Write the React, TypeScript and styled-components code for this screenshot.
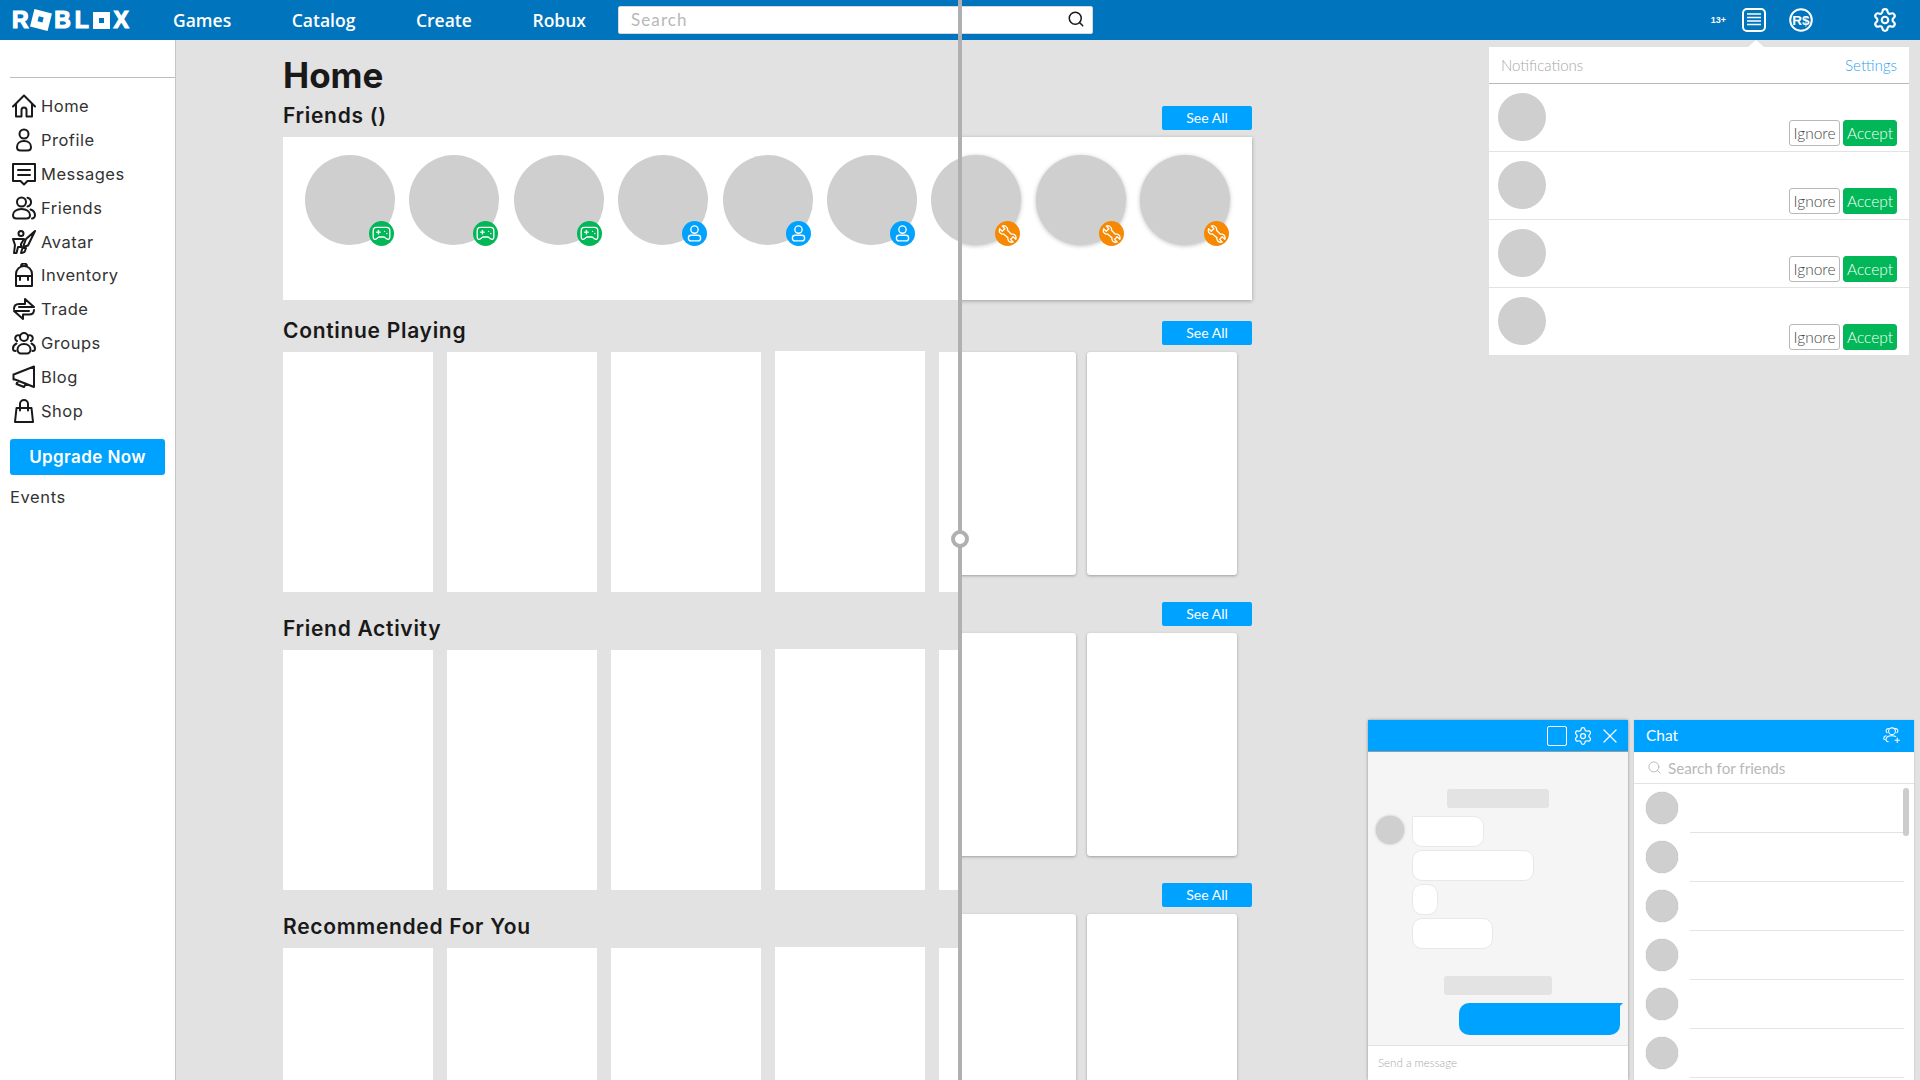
import styled, { createGlobalStyle } from "styled-components";
import { Search, Settings, X } from "lucide-react";

const GOTHAM = `Inter, "Liberation Sans", sans-serif`;
const SOURCE = `Lato, "Open Sans", sans-serif`;

const GlobalStyle = createGlobalStyle`
	* { box-sizing: border-box; }
	html, body { margin: 0; padding: 0; background: #e2e2e2; }
`;

const Page = styled.div`
	position: relative;
	width: 1920px;
	height: 1080px;
	overflow: hidden;
	background: #e2e2e2;
	color: #191919;
	font-family: ${GOTHAM};
`;

/* top bar */
const TopBar = styled.header`
	display: flex;
	align-items: center;
	height: 40px;
	padding: 0 22px 0 12px;
	background: #0074bd;
	color: #fff;
`;

const Logo = styled.div`
	display: flex;
	align-items: center;
	justify-content: space-between;
	width: 117px;
	margin-right: 44px;
`;

const LogoLetter = styled.span`
	font-family: "Liberation Sans", sans-serif;
	font-size: 23px;
	font-weight: 700;
	line-height: 20px;
	color: #fff;
	-webkit-text-stroke: 1.2px #fff;
`;

const LogoBox = styled.span<{ $tilt?: boolean }>`
	position: relative;
	display: block;
	width: ${(p) => (p.$tilt ? 18 : 17)}px;
	height: ${(p) => (p.$tilt ? 18 : 17)}px;
	background: #fff;
	transform: rotate(${(p) => (p.$tilt ? 14 : 0)}deg);
	&::after {
		content: "";
		position: absolute;
		left: 6px;
		top: 6px;
		width: 5px;
		height: 5px;
		background: #0074bd;
	}
`;

const NavLinks = styled.nav`
	display: flex;
	justify-content: space-between;
	width: 413px;
	margin-right: 32px;
`;

const NavLink = styled.a`
	font-family: "Open Sans", sans-serif;
	font-size: 17.5px;
	font-weight: 600;
	color: #fff;
`;

const SearchBox = styled.div`
	display: flex;
	align-items: center;
	justify-content: space-between;
	width: 475px;
	height: 28px;
	padding: 0 7px 2px 12px;
	background: #fff;
	border: 1px solid #d8d8d8;
	border-radius: 2px;
	font-family: ${SOURCE};
	font-size: 17px;
	letter-spacing: 1.1px;
	color: #b8b8b8;
`;

const NavIcons = styled.div`
	display: flex;
	align-items: center;
	gap: 23.5px;
	margin-left: auto;
`;

const AgeLabel = styled.span`
	margin-right: -8px;
	font-family: "Liberation Sans", sans-serif;
	font-size: 9px;
	font-weight: 700;
	color: #fff;
`;

const GearSlot = styled.span`
	display: flex;
	margin-left: 35.5px;
`;

/* sidebar */
const Body = styled.div`
	display: flex;
	height: 1040px;
`;

const Sidebar = styled.aside`
	flex: 0 0 176px;
	padding: 37px 0 0 10px;
	background: #fff;
	border-right: 1px solid #c6c6c6;
`;

const SideRule = styled.hr`
	height: 1px;
	margin: 0 0 11px;
	border: 0;
	background: #bdbdbd;
`;

const SideItem = styled.a`
	display: flex;
	align-items: center;
	gap: 5px;
	height: 33.9px;
	margin-left: 2px;
	font-size: 16.5px;
	letter-spacing: 0.5px;
	color: #333;
`;

const SideIcon = styled.svg`
	flex: 0 0 24px;
	width: 24px;
	height: 24px;
	fill: none;
	stroke: #191919;
	stroke-width: 2;
	stroke-linejoin: round;
	stroke-linecap: round;
`;

const UpgradeButton = styled.button`
	display: block;
	width: 155px;
	height: 36px;
	margin-top: 11px;
	border: 0;
	border-radius: 3px;
	background: #00a2ff;
	color: #fff;
	font-family: ${GOTHAM};
	font-size: 17px;
	font-weight: 600;
	letter-spacing: 0.4px;
`;

const EventsLink = styled.a`
	display: block;
	margin-top: 12px;
	font-size: 16.5px;
	letter-spacing: 0.6px;
	color: #333;
`;

/* boards on either side of the slider */
const Stage = styled.main`
	position: relative;
	flex: 1;
	overflow: hidden;
`;

const BeforeLayer = styled.div`
	position: absolute;
	left: 0;
	top: 0;
	width: 782px;
	height: 100%;
	overflow: hidden;
	background: #e2e2e2;
`;

const BoardWrap = styled.div`
	width: 1076px;
	padding: 15px 0 0 107px;
`;

const PageTitle = styled.h1`
	height: 40px;
	margin: 0 0 11px;
	font-size: 35px;
	font-weight: 700;
	line-height: 40px;
	color: #191919;
`;

const Section = styled.section<{ $gap: number }>`
	margin-bottom: ${(p) => p.$gap}px;
`;

const SectionHeader = styled.div`
	display: flex;
	justify-content: space-between;
	align-items: flex-start;
	width: 969px;
	height: 24px;
	margin-bottom: 7px;
`;

const SectionTitle = styled.h2`
	margin: -2px 0 0;
	font-size: 21px;
	font-weight: 600;
	line-height: 24px;
	letter-spacing: 0.7px;
	color: #191919;
`;

const SeeAll = styled.button`
	width: 90px;
	height: 24px;
	margin-left: auto;
	padding: 0 0 2px;
	border: 0;
	border-radius: 2px;
	background: #00a2ff;
	color: #fff;
	font-family: ${SOURCE};
	font-size: 14px;
	font-weight: 400;
`;

const FriendsCard = styled.div<{ $after: boolean }>`
	display: flex;
	justify-content: space-between;
	width: 969px;
	height: 163px;
	padding: 18px 22px;
	background: #fff;
	box-shadow: ${(p) => (p.$after ? "0 1px 4px rgba(0, 0, 0, 0.3)" : "none")};
`;

const FriendAvatar = styled.div<{ $after: boolean }>`
	position: relative;
	width: 90px;
	height: 90px;
	border-radius: 50%;
	background: #cfcfcf;
	box-shadow: ${(p) => (p.$after ? "0 1px 4px rgba(0, 0, 0, 0.25)" : "none")};
`;

const StatusBadge = styled.span<{ $color: string }>`
	position: absolute;
	right: 1.5px;
	bottom: -0.5px;
	display: flex;
	align-items: center;
	justify-content: center;
	width: 25px;
	height: 25px;
	border-radius: 50%;
	background: ${(p) => p.$color};
`;

const BadgeIcon = styled.svg`
	width: 21px;
	height: 21px;
	fill: none;
	stroke: #fff;
	stroke-width: 1.5;
	stroke-linejoin: round;
	stroke-linecap: round;
`;

const CardRow = styled.div<{ $after: boolean }>`
	display: flex;
	align-items: flex-start;
	gap: ${(p) => (p.$after ? 11 : 14)}px;
	margin-left: ${(p) => (p.$after ? 656 : 0)}px;
`;

const GameCard = styled.div<{ $after: boolean; $width: number }>`
	flex: 0 0 ${(p) => p.$width}px;
	height: ${(p) => (p.$after ? 223 : 240)}px;
	background: #fff;
	border-radius: ${(p) => (p.$after ? 3 : 0)}px;
	box-shadow: ${(p) => (p.$after ? "0 1px 3px rgba(0, 0, 0, 0.3)" : "none")};
	&:nth-child(4) {
		height: 241px;
		margin-top: -1px;
	}
`;

/* slider */
const SliderLine = styled.div`
	position: absolute;
	left: 958px;
	top: 0;
	width: 4px;
	height: 1080px;
	background: #b0b0b0;
`;

const SliderHandle = styled.div`
	position: absolute;
	left: -7px;
	top: 530px;
	width: 18px;
	height: 18px;
	border: 4px solid #b0b0b0;
	border-radius: 50%;
	background: #fff;
`;

/* notifications */
const NotificationPanel = styled.aside`
	position: absolute;
	left: 1489px;
	top: 47px;
	width: 420px;
	background: #fff;
	font-family: ${SOURCE};
	&::before {
		content: "";
		position: absolute;
		left: 259px;
		top: -7px;
		border-left: 8px solid transparent;
		border-right: 8px solid transparent;
		border-bottom: 7px solid #fff;
	}
`;

const PanelHeader = styled.div`
	display: flex;
	align-items: center;
	justify-content: space-between;
	height: 37px;
	padding: 0 12px;
	border-bottom: 1px solid #b8b8b8;
	font-size: 15px;
	font-weight: 300;
	color: #a8a8a8;
`;

const PanelLink = styled.a`
	color: #2f9ff0;
	font-size: 15.2px;
	font-weight: 300;
`;

const NoticeRow = styled.div`
	display: flex;
	justify-content: space-between;
	align-items: flex-end;
	height: 68px;
	padding: 0 12px 5px 9px;
	border-bottom: 1px solid #e3e3e3;
	&:last-child {
		height: 67px;
		padding-bottom: 5px;
		border-bottom: 0;
	}
`;

const NoticeAvatar = styled.div`
	align-self: flex-start;
	width: 48px;
	height: 48px;
	margin-top: 9px;
	border-radius: 50%;
	background: #cfcfcf;
`;

const NoticeActions = styled.div`
	display: flex;
	gap: 3px;
`;

const ActionButton = styled.button<{ $primary?: boolean }>`
	width: ${(p) => (p.$primary ? 54 : 51)}px;
	height: 26px;
	padding: 0;
	border: 1px solid ${(p) => (p.$primary ? "#02b757" : "#b8b8b8")};
	border-radius: 3px;
	background: ${(p) => (p.$primary ? "#02b757" : "#fff")};
	color: ${(p) => (p.$primary ? "#fff" : "#444")};
	font-family: ${SOURCE};
	font-size: 15.5px;
	font-weight: 300;
`;

/* chat */
const ChatDialog = styled.aside`
	position: absolute;
	left: 1368px;
	top: 720px;
	display: flex;
	flex-direction: column;
	width: 260px;
	height: 360px;
	background: #fff;
	box-shadow: 0 0 3px rgba(0, 0, 0, 0.35);
	font-family: ${SOURCE};
`;

const DialogHeader = styled.div`
	display: flex;
	align-items: center;
	justify-content: flex-end;
	gap: 5px;
	height: 32px;
	padding-right: 6px;
	background: #00a2ff;
	border-bottom: 1px solid #9a9a9a;
	color: #fff;
`;

const DialogSquare = styled.span`
	width: 20px;
	height: 20px;
	margin-right: 1px;
	border: 1px solid #fff;
	border-radius: 2px;
`;

const DialogBody = styled.div`
	display: flex;
	flex-direction: column;
	height: 294px;
	padding-top: 37px;
	background: #f5f5f5;
	border-bottom: 1px solid #e3e3e3;
`;

const DateBar = styled.div<{ $width: number }>`
	align-self: center;
	flex: 0 0 19px;
	width: ${(p) => p.$width}px;
	border-radius: 3px;
	background: #e3e3e3;
`;

const MessageGroup = styled.div`
	display: flex;
	gap: 8px;
	margin: 8px 0 27px 8px;
`;

const MessageAvatar = styled.div`
	flex: 0 0 28px;
	height: 28px;
	border-radius: 50%;
	background: #cfcfcf;
	box-shadow: 0 0 3px rgba(0, 0, 0, 0.25);
`;

const BubbleStack = styled.div`
	display: flex;
	flex-direction: column;
	align-items: flex-start;
	gap: 3px;
`;

const Bubble = styled.div<{ $width: number; $tail?: boolean }>`
	position: relative;
	width: ${(p) => p.$width}px;
	height: 31px;
	border: 1px solid #e8e8e8;
	border-radius: 10px;
	border-top-left-radius: ${(p) => (p.$tail ? 0 : 10)}px;
	background: #fff;
`;

const OwnBubble = styled.div`
	position: relative;
	align-self: flex-end;
	width: 161px;
	height: 32px;
	margin: 8px 8px 0 0;
	border-radius: 10px;
	border-top-right-radius: 0;
	background: #00a2ff;
	&::after {
		content: "";
		position: absolute;
		right: -3px;
		top: 0;
		border-top: 3px solid #00a2ff;
		border-right: 3px solid transparent;
	}
`;

const DialogInput = styled.div`
	padding: 10px 0 0 10px;
	font-size: 11.5px;
	font-weight: 300;
	color: #a8a8a8;
`;

const ChatList = styled.aside`
	position: absolute;
	left: 1634px;
	top: 720px;
	width: 280px;
	height: 360px;
	background: #fff;
	font-family: ${SOURCE};
	box-shadow: 0 0 2px rgba(0, 0, 0, 0.15);
`;

const ChatHeader = styled.div`
	display: flex;
	align-items: center;
	justify-content: space-between;
	height: 32px;
	padding: 0 13px 2px 12px;
	background: #00a2ff;
	color: #fff;
	font-size: 15.5px;
`;

const HeaderIcon = styled.svg`
	width: 18px;
	height: 18px;
	fill: none;
	stroke: #fff;
	stroke-width: 1.4;
	stroke-linecap: round;
	stroke-linejoin: round;
`;

const FriendSearch = styled.div`
	display: flex;
	align-items: center;
	gap: 6px;
	height: 32px;
	padding-left: 13px;
	border-bottom: 1px solid #e3e3e3;
	color: #b8b8b8;
	font-size: 15.2px;
`;

const FriendRow = styled.div`
	display: flex;
	height: 49px;
	padding: 8px 10px 0 12px;
`;

const FriendRowAvatar = styled.div`
	flex: 0 0 32px;
	height: 32px;
	border-radius: 50%;
	background: #cfcfcf;
	box-shadow: 0 0 1px rgba(0, 0, 0, 0.4);
`;

const FriendRowLine = styled.div`
	flex: 1;
	height: 41px;
	margin-left: 12px;
	border-bottom: 1px solid #e3e3e3;
`;

const ScrollThumb = styled.div`
	position: absolute;
	left: 269px;
	top: 68px;
	width: 6px;
	height: 48px;
	border-radius: 3px;
	background: #cccccc;
`;

const sideItems = [
	{ label: "Home", icon: <path d="M1 12.5 12 1.5l11 11M4 10v12.5h5.5V16a2.5 2.5 0 0 1 5 0v6.500H20V10" /> },
	{
		label: "Profile",
		icon: (
			<>
				<circle cx="12" cy="6" r="4.5" />
				<path d="M12 13c-4.200 0-7 2.600-7 6 0 2 1.500 3.500 3.500 3.500h7c2 0 3.500-1.500 3.500-3.500 0-3.400-2.800-6-7-6z" />
			</>
		),
	},
	{ label: "Messages", icon: <path d="M1 2h22v17h-7.500L12 22.500 8.500 19H1zM6 8h12M6 13h12" /> },
	{
		label: "Friends",
		icon: (
			<>
				<circle cx="9.500" cy="6" r="4.500" />
				<path d="M9.500 13c-5 0-8.500 2.800-8.500 6 0 2 1.500 3.500 3.500 3.500h10c2 0 3.500-1.500 3.500-3.500 0-3.200-3.500-6-8.500-6zM15.500 1.700a4.500 4.500 0 0 1 0 8.800M18.500 13.500c2.800 1 4.500 3.200 4.500 5.700 0 1.800-1.300 3.300-3 3.300" />
			</>
		),
	},
	{
		label: "Avatar",
		icon: (
			<>
				<circle cx="9" cy="3.500" r="2.500" />
				<path d="M1 9h11l-3 5v3H6l-1.500 6H2l1-8zM23 1l-9 8-3 8 5-1.500zM9 23l1.500-5h3.500l-1 3c-.5 1.500-2.500 2-4 2z" />
			</>
		),
	},
	{
		label: "Inventory",
		icon: (
			<>
				<path d="M4 11a8 8 0 0 1 16 0v12H4zM9 3.500a3 3 0 0 1 6 0M4 13h16M8 13v4M16 13v4" />
			</>
		),
	},
	{ label: "Trade", icon: <path d="M2 12c0-3 2-5 5-5h6V2l9 8H7M22 13c0 3-2 4.500-5 4.500h-6V22l-9-8h15" /> },
	{
		label: "Groups",
		icon: (
			<>
				<circle cx="12" cy="6" r="4" />
				<path d="M12 13c-4 0-6.500 2.500-6.500 5.500 0 2.200 1.500 4 3.500 4h6c2 0 3.500-1.800 3.500-4 0-3-2.500-5.500-6.500-5.500zM7.500 4.500a3 3 0 1 0-2.500 5.500M16.500 4.500A3 3 0 1 1 19 10M4.500 12.500C2.500 13.500 1 15.200 1 17.500 1 19 2 20 3.500 20M19.500 12.500c2 1 3.500 2.700 3.500 5 0 1.500-1 2.500-2.500 2.500" />
			</>
		),
	},
	{ label: "Blog", icon: <path d="M22 1.500V22L3 14.500H1.500V9.500L3 9zM6 15.500 4.500 19l7.500 3 2-3.500" /> },
	{ label: "Shop", icon: <path d="M4.500 9h15L21 23H3zM8 11.500V5a4 4 0 0 1 8 0v6.500" /> },
];

const GamepadIcon = () => (
	<BadgeIcon viewBox="0 0 24 24">
		<path d="M6 5h12c2.500 0 3.500 2 3.500 4v7c0 2-1.500 3-3 2.500L15 16H9l-3.500 2.500c-1.500.5-3-.5-3-2.500V9c0-2 1-4 3.500-4z" />
		<path d="M6.500 10.500h4M8.500 8.500v4M15.500 9.500h.1M18 12h.1" />
	</BadgeIcon>
);

const PersonIcon = () => (
	<BadgeIcon viewBox="0 0 24 24">
		<circle cx="12" cy="7.500" r="4.200" />
		<rect x="5" y="14" width="14" height="6.500" rx="3.200" />
	</BadgeIcon>
);

const WrenchIcon = () => (
	<BadgeIcon viewBox="0 0 24 24">
		<path d="M3 6.500 6 9.500l3-3-3-3c2.500-1 5.500.5 6 3 .2 1 0 1.800 0 1.800l4.500 4.500s1-.3 2-.1c2.500.5 4 3.500 3 6l-3-3-3 3 3 3c-2.500 1-5.500-.5-6-3-.2-1 0-1.800 0-1.800L7.500 12.500s-1 .3-2 .1c-2.500-.5-3.500-3.500-2.500-6.100z" />
	</BadgeIcon>
);

const friendStatuses = [
	{ color: "#02b757", icon: <GamepadIcon /> },
	{ color: "#02b757", icon: <GamepadIcon /> },
	{ color: "#02b757", icon: <GamepadIcon /> },
	{ color: "#00a2ff", icon: <PersonIcon /> },
	{ color: "#00a2ff", icon: <PersonIcon /> },
	{ color: "#00a2ff", icon: <PersonIcon /> },
	{ color: "#f68802", icon: <WrenchIcon /> },
	{ color: "#f68802", icon: <WrenchIcon /> },
	{ color: "#f68802", icon: <WrenchIcon /> },
];

const sections = ["Continue Playing", "Friend Activity", "Recommended For You"];

// the left of the slider shows the titles, the right of it the See All buttons
const Board = ({ after }: { after: boolean }) => {
	const widths = after ? [137, 150] : [150, 150, 150, 150, 150];

	return (
		<BoardWrap>
			<PageTitle>{after ? "" : "Home"}</PageTitle>
			<Section $gap={21}>
				<SectionHeader>
					{!after && <SectionTitle>Friends ()</SectionTitle>}
					{after && <SeeAll>See All</SeeAll>}
				</SectionHeader>
				<FriendsCard $after={after}>
					{friendStatuses.map((status, i) => (
						<FriendAvatar key={i} $after={after}>
							<StatusBadge $color={status.color}>{status.icon}</StatusBadge>
						</FriendAvatar>
					))}
				</FriendsCard>
			</Section>
			{sections.map((title) => (
				<Section key={title} $gap={27}>
					<SectionHeader>
						{!after && <SectionTitle>{title}</SectionTitle>}
						{after && <SeeAll>See All</SeeAll>}
					</SectionHeader>
					<CardRow $after={after}>
						{widths.map((width, i) => (
							<GameCard key={i} $after={after} $width={width} />
						))}
					</CardRow>
				</Section>
			))}
		</BoardWrap>
	);
};

const App = () => {
	return (
		<Page>
			<GlobalStyle />
			<TopBar>
				<Logo>
					<LogoLetter>R</LogoLetter>
					<LogoBox $tilt />
					<LogoLetter>B</LogoLetter>
					<LogoLetter>L</LogoLetter>
					<LogoBox />
					<LogoLetter>X</LogoLetter>
				</Logo>
				<NavLinks>
					<NavLink>Games</NavLink>
					<NavLink>Catalog</NavLink>
					<NavLink>Create</NavLink>
					<NavLink>Robux</NavLink>
				</NavLinks>
				<SearchBox>
					Search
					<Search size={18} color="#191919" strokeWidth={2} />
				</SearchBox>
				<NavIcons>
					<AgeLabel>13+</AgeLabel>
					<svg width="24" height="24" viewBox="0 0 24 24" fill="none" stroke="#fff" strokeWidth="2">
						<rect x="1" y="1" width="22" height="22" rx="4" />
						<path d="M5 6h14M5 9.500h14M5 13h14M5 16.500h14" strokeWidth="1.500" />
					</svg>
					<svg width="24" height="24" viewBox="0 0 24 24" fill="none">
						<circle cx="12" cy="12" r="10.800" stroke="#fff" strokeWidth="2" />
						<text x="12" y="16.700" textAnchor="middle" fontFamily="Liberation Sans" fontWeight="700" fontSize="13.500" fill="#fff">
							R$
						</text>
					</svg>
					<GearSlot>
						<Settings size={26} color="#fff" strokeWidth={2} />
					</GearSlot>
				</NavIcons>
			</TopBar>
			<Body>
				<Sidebar>
					<SideRule />
					{sideItems.map((item) => (
						<SideItem key={item.label}>
							<SideIcon viewBox="0 0 24 24">{item.icon}</SideIcon>
							{item.label}
						</SideItem>
					))}
					<UpgradeButton>Upgrade Now</UpgradeButton>
					<EventsLink>Events</EventsLink>
				</Sidebar>
				<Stage>
					<Board after />
					<BeforeLayer>
						<Board after={false} />
					</BeforeLayer>
				</Stage>
			</Body>
			<SliderLine>
				<SliderHandle />
			</SliderLine>
			<NotificationPanel>
				<PanelHeader>
					Notifications
					<PanelLink>Settings</PanelLink>
				</PanelHeader>
				{[0, 1, 2, 3].map((i) => (
					<NoticeRow key={i}>
						<NoticeAvatar />
						<NoticeActions>
							<ActionButton>Ignore</ActionButton>
							<ActionButton $primary>Accept</ActionButton>
						</NoticeActions>
					</NoticeRow>
				))}
			</NotificationPanel>
			<ChatDialog>
				<DialogHeader>
					<DialogSquare />
					<Settings size={20} strokeWidth={1.5} />
					<X size={24} strokeWidth={1.3} />
				</DialogHeader>
				<DialogBody>
					<DateBar $width={102} />
					<MessageGroup>
						<MessageAvatar />
						<BubbleStack>
							<Bubble $width={72} $tail />
							<Bubble $width={122} />
							<Bubble $width={26} />
							<Bubble $width={81} />
						</BubbleStack>
					</MessageGroup>
					<DateBar $width={108} />
					<OwnBubble />
				</DialogBody>
				<DialogInput>Send a message</DialogInput>
			</ChatDialog>
			<ChatList>
				<ChatHeader>
					Chat
					<HeaderIcon viewBox="0 0 24 24">
						<circle cx="12" cy="7" r="4.500" />
						<path d="M7 21c-2 0-3-1-3-3 0-3 3-5 8-5 2 0 3.500.3 5 1M7.500 3.500a3 3 0 0 0-2 5.500M4 13c-2 .5-3 2-3 3.500 0 1 .5 1.500 1.500 1.500M16.500 3.500a3 3 0 0 1 2 5.500M19 16v6M16 19h6" />
					</HeaderIcon>
				</ChatHeader>
				<FriendSearch>
					<Search size={15} color="#b8b8b8" strokeWidth={1.5} />
					Search for friends
				</FriendSearch>
				{[0, 1, 2, 3, 4, 5, 6].map((i) => (
					<FriendRow key={i}>
						<FriendRowAvatar />
						<FriendRowLine />
					</FriendRow>
				))}
				<ScrollThumb />
			</ChatList>
		</Page>
	);
};

export default App;
